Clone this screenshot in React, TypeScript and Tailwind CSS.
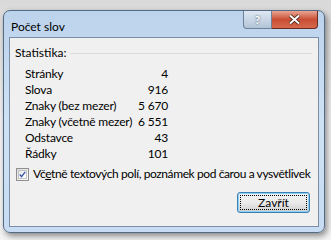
import React from "react";

const rows: [string, string][] = [
  ["Stránky", "4"],
  ["Slova", "916"],
  ["Znaky (bez mezer)", "5 670"],
  ["Znaky (včetně mezer)", "6 551"],
  ["Odstavce", "43"],
  ["Řádky", "101"],
];

function CheckMark() {
  return (
    <svg width="9" height="9" viewBox="0 0 9 9">
      <path d="M1 4.5 L3.3 7.2 L8 1.2" fill="none" stroke="#3a57a8" strokeWidth="1.8" />
    </svg>
  );
}

export default function App() {
  return (
    <div
      className="w-[331px] h-[240px] overflow-hidden bg-gradient-to-b from-[#d9d9d9] via-[#f4f4f4] to-[#f4f4f4] pt-[10px] pl-[3px]"
      style={{ fontFamily: 'Lato, "Segoe UI", sans-serif' }}
    >
      {/* window frame */}
      <div className="w-[322px] h-[223px] rounded-[7px] border border-[#546a84] bg-gradient-to-b from-[#bcd3ec] via-[#cfe1f4] to-[#c7dcf2] shadow-[2px_3px_6px_rgba(0,0,0,0.45)] flex flex-col px-[5px] pb-[5px]">
        {/* caption */}
        <div className="h-[26px] flex items-start justify-between">
          <span className="pl-[2px] pt-[8px] text-[12px] leading-[16px] text-black">Počet slov</span>
          <div className="flex mr-[1px]">
            <div className="w-[29px] h-[18px] rounded-bl-[4px] border border-t-0 border-[#6f809a] bg-gradient-to-b from-[#dfe8f3] to-[#b3c4d8] flex items-center justify-center text-[12px] font-bold text-white [text-shadow:0_0_2px_#33445a]">
              ?
            </div>
            <div className="w-[46px] h-[18px] rounded-br-[4px] border border-l-0 border-t-0 border-[#6b2a20] bg-gradient-to-b from-[#e8a493] via-[#c94d34] to-[#d56a4c] flex items-center justify-center">
              <svg width="13" height="11" viewBox="0 0 13 11">
                <path d="M2 1.5 L11 9.5 M11 1.5 L2 9.5" stroke="#3a1810" strokeWidth="3.6" />
                <path d="M2 1.5 L11 9.5 M11 1.5 L2 9.5" stroke="#ffffff" strokeWidth="2" />
              </svg>
            </div>
          </div>
        </div>

        {/* client area */}
        <div className="flex-1 border border-[#7b8ea6] bg-[#f0f0f0] text-[12px] text-black flex flex-col px-[5px]">
          <div className="flex items-center gap-[4px] mt-[7px] h-[16px]">
            <span>Statistika:</span>
            <div className="flex-1 h-px bg-[#dcdcdc] mr-[1px]" />
          </div>

          <div className="grid grid-cols-[110px_33px] ml-[10px] mt-[5px] whitespace-nowrap tracking-[-0.2px]">
            {rows.map(([label, value]) => (
              <React.Fragment key={label}>
                <span className="h-[16px] leading-[16px]">{label}</span>
                <span className="h-[16px] leading-[16px] text-right">{value}</span>
              </React.Fragment>
            ))}
          </div>

          <div className="flex items-center gap-[4px] mt-[4px] ml-[1px]">
            <div className="w-[13px] h-[13px] border border-[#8e8f8f] bg-gradient-to-br from-[#dcdcdc] to-[#ffffff] p-[1px]">
              <div className="w-full h-full border border-[#c4c4c4] bg-gradient-to-br from-[#e9e9e9] to-[#ffffff] flex items-center justify-center">
                <CheckMark />
              </div>
            </div>
            <span className="leading-[16px] whitespace-nowrap tracking-[-0.4px]">
              Vč<span className="underline">e</span>tně textových polí, poznámek pod čarou a vysvětlivek
            </span>
          </div>

          <div className="flex justify-end mt-[10px] mr-[3px]">
            <div className="w-[73px] h-[21px] rounded-[3px] border border-[#3c7fb1] bg-gradient-to-b from-[#f2f2f2] via-[#ebebeb] to-[#cfcfcf] p-[2px] shadow-[inset_0_0_0_1px_#8cd0f6]">
              <div className="w-full h-full border border-dotted border-black flex items-center justify-center leading-none">
                Zavřít
              </div>
            </div>
          </div>
        </div>
      </div>
    </div>
  );
}
